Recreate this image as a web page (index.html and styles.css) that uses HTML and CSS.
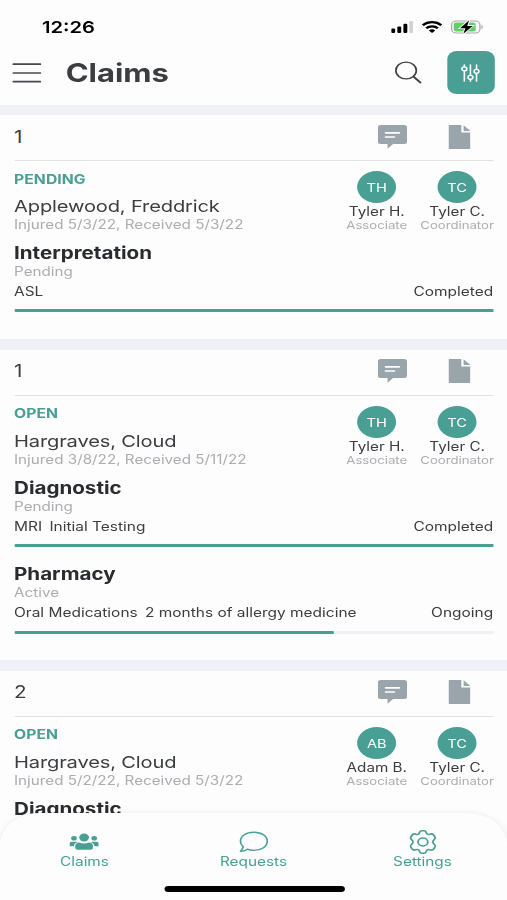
FILE: index.html
```html
<!DOCTYPE html>
<html lang="en">
<head>
<meta charset="utf-8">
<title>Claims</title>
<link rel="stylesheet" href="styles.css">
</head>
<body>
<svg width="0" height="0" class="defs" aria-hidden="true">
  <symbol id="chat" viewBox="0 0 24 24"><path fill="#9aa4ab" d="M2.500 0h19a2.500 2.500 0 0 1 2.500 2.500v14a2.500 2.500 0 0 1-2.500 2.500H12.500L8 23.800V19H2.500A2.500 2.500 0 0 1 0 16.500v-14A2.500 2.500 0 0 1 2.500 0Z"/><path stroke="#fff" stroke-width="1.700" stroke-linecap="round" d="M6.500 7.800h11M6.500 12h7"/></symbol>
  <symbol id="doc" viewBox="0 0 18 24"><path fill="#9aa4ab" d="M1 0h9.500v7.500H18V23a1 1 0 0 1-1 1H1a1 1 0 0 1-1-1V1a1 1 0 0 1 1-1ZM12.400.3 18 6h-5.600Z"/></symbol>
</svg>
<div class="screen">
  <header class="top">
    <div class="status-bar">
      <span class="clock">12:26</span>
      <div class="indicators">
        <svg class="signal" viewBox="0 0 18 12"><rect y="7.600" width="3.200" height="4.400" rx="1"/><rect x="5" y="5.400" width="3.200" height="6.600" rx="1"/><rect x="10" y="2.800" width="3.200" height="9.200" rx="1"/><rect x="14.800" width="3.200" height="12" rx="1" fill="#d2d2d4"/></svg>
        <svg class="wifi" viewBox="0 0 17 12"><path fill="none" stroke="#000" stroke-width="2.200" d="M.9 4.200C5.100.1 11.900.1 16.100 4.200M3.700 7.200c2.600-2.500 7-2.500 9.600 0"/><path d="M5.900 9.400c1.500-1.400 3.700-1.400 5.200 0L8.500 12Z"/></svg>
        <svg class="battery" viewBox="0 0 27 14"><rect x=".6" y=".9" width="23.200" height="12.200" rx="3.800" fill="#fff" stroke="#a5a5a5" stroke-width="1"/><rect x="2.300" y="2.600" width="18" height="8.800" rx="2.200" fill="#62cf65"/><path d="M25 5v4c1.500-.5 1.500-3.500 0-4Z" fill="#a5a5a5"/><path d="M14.900.3 7.500 8.200h4.300l-1.600 5.600L17.900 5.900h-4.500Z" stroke="#fff" stroke-width="1.600" paint-order="stroke"/></svg>
      </div>
    </div>
    <div class="nav">
      <svg class="menu" viewBox="0 0 24 20"><path stroke="#46484b" stroke-width="1.700" stroke-linecap="round" d="M1 1.200h22M1 10h22M1 18.700h22"/></svg>
      <h1>Claims</h1>
      <svg class="search" viewBox="0 0 22 23"><g fill="none" stroke="#3f4144" stroke-width="1.400" stroke-linecap="round"><circle cx="9.200" cy="9.500" r="8.400"/><path d="m15.300 15.700 5.700 6" stroke-width="1.700"/></g></svg>
      <button class="filter" aria-label="Filter"><svg viewBox="0 0 16 18"><g fill="none" stroke="#fff" stroke-width="1.300" stroke-linecap="round"><path d="M3 .8v2M3 7v10.200M8 .8v10.400M8 15.400v1.800M13 .8v4.400M13 9.400v7.800"/><circle cx="3" cy="4.900" r="2"/><circle cx="8" cy="13.300" r="2"/><circle cx="13" cy="7.300" r="2"/></g></svg></button>
    </div>
  </header>
  <main>
    <article class="card">
      <div class="card-head"><span>1</span><svg class="chat"><use href="#chat"/></svg><svg class="doc"><use href="#doc"/></svg></div>
      <div class="summary">
        <div class="claim"><p class="state">PENDING</p><h2>Applewood, Freddrick</h2><p class="dates">Injured 5/3/22, Received 5/3/22</p></div>
        <div class="person associate"><b>TH</b><span class="who">Tyler H.</span><span class="role">Associate</span></div>
        <div class="person coordinator"><b>TC</b><span class="who">Tyler C.</span><span class="role">Coordinator</span></div>
      </div>
      <section class="service"><h3>Interpretation</h3><p class="phase">Pending</p><p class="detail"><span>ASL</span><span class="result">Completed</span></p><div class="bar"><i></i></div></section>
    </article>
    <article class="card">
      <div class="card-head"><span>1</span><svg class="chat"><use href="#chat"/></svg><svg class="doc"><use href="#doc"/></svg></div>
      <div class="summary">
        <div class="claim"><p class="state">OPEN</p><h2>Hargraves, Cloud</h2><p class="dates">Injured 3/8/22, Received 5/11/22</p></div>
        <div class="person associate"><b>TH</b><span class="who">Tyler H.</span><span class="role">Associate</span></div>
        <div class="person coordinator"><b>TC</b><span class="who">Tyler C.</span><span class="role">Coordinator</span></div>
      </div>
      <section class="service"><h3>Diagnostic</h3><p class="phase">Pending</p><p class="detail"><span>MRI</span><span>Initial Testing</span><span class="result">Completed</span></p><div class="bar"><i></i></div></section>
      <section class="service"><h3>Pharmacy</h3><p class="phase">Active</p><p class="detail"><span>Oral Medications</span><span>2 months of allergy medicine</span><span class="result">Ongoing</span></p><div class="bar"><i style="width:66.6%"></i></div></section>
    </article>
    <article class="card">
      <div class="card-head"><span>2</span><svg class="chat"><use href="#chat"/></svg><svg class="doc"><use href="#doc"/></svg></div>
      <div class="summary">
        <div class="claim"><p class="state">OPEN</p><h2>Hargraves, Cloud</h2><p class="dates">Injured 5/2/22, Received 5/3/22</p></div>
        <div class="person associate"><b>AB</b><span class="who">Adam B.</span><span class="role">Associate</span></div>
        <div class="person coordinator"><b>TC</b><span class="who">Tyler C.</span><span class="role">Coordinator</span></div>
      </div>
      <section class="service"><h3>Diagnostic</h3></section>
    </article>
  </main>
  <nav class="tabs">
    <a><svg viewBox="0 0 24 24" fill="#4a9f95"><circle cx="12" cy="7.500" r="4"/><circle cx="3.700" cy="8.300" r="2.300"/><circle cx="20.300" cy="8.300" r="2.300"/><path d="M8 12.500c2.500 1.300 5.500 1.300 8 0 2 .2 3.300 1.600 3.300 3.600v1.700q0 2-2 2H6.700q-2 0-2-2v-1.700c0-2 1.300-3.400 3.300-3.600ZM2.200 11.800h3.300l.8.500c-1.700.7-2.600 2-2.800 4H0v-2.300q0-2.200 2.200-2.200ZM21.800 11.800h-3.300l-.8.500c1.700.7 2.600 2 2.800 4H24v-2.300q0-2.200-2.200-2.200Z"/></svg>Claims</a>
    <a><svg viewBox="0 0 24 24" fill="none" stroke="#4a9f95" stroke-width="1.400" stroke-linejoin="round"><path d="M12.300 2.200C18.700 2.200 23.300 6.200 23.300 11.300S18.700 20.400 12.300 20.400c-2 0-3.800-.4-5.400-1.200-1.600 1.400-3.500 2.100-5.600 2.100 1.300-1.500 2.100-3.100 2.200-4.700C2.100 15.200 1.300 13.400 1.300 11.300c0-5.100 4.600-9.100 11-9.100Z"/></svg>Requests</a>
    <a><svg viewBox="0 0 24 24" fill="none" stroke="#4a9f95" stroke-width="1.500" stroke-linejoin="round"><circle cx="12" cy="12" r="4"/><path d="M11.100.8Q9.700.8 9.400 2.200C9.100 4 8 4.800 6.300 4.200 4.700 3.500 4 3.700 3.200 5L2.100 6.900C1.500 8 1.700 8.700 2.700 9.600 4.200 10.900 4.200 13.100 2.700 14.400 1.700 15.300 1.500 16 2.100 17.100L3.200 19C4 20.300 4.700 20.500 6.300 19.800 8 19.200 9.100 20 9.400 21.800Q9.700 23.200 11.100 23.200h1.800Q14.300 23.200 14.600 21.800C14.900 20 16 19.200 17.700 19.800 19.300 20.500 20 20.300 20.800 19L21.900 17.100C22.500 16 22.300 15.300 21.300 14.400 19.800 13.100 19.800 10.900 21.300 9.600 22.300 8.700 22.500 8 21.900 6.900L20.800 5C20 3.700 19.300 3.500 17.700 4.200 16 4.800 14.900 4 14.600 2.200Q14.300.8 12.900.8Z"/></svg>Settings</a>
    <div class="home"></div>
  </nav>
</div>
</body>
</html>
```
FILE: styles.css
```css
* { box-sizing: border-box; }
body { margin: 0; background: #fdfdfe; overflow: hidden; }
h1, h2, h3, p { margin: 0; }
.defs { position: absolute; }

/* 416px layout widened to fill the 507px viewport */
.screen {
  width: 416px; height: 900px; overflow: hidden;
  display: flex; flex-direction: column;
  transform: scaleX(1.21875); transform-origin: 0 0;
  font-family: Inter, "Liberation Sans", sans-serif; color: #3b3d40;
}
.top { flex: none; height: 104.500px; }
.status-bar { display: flex; align-items: center; height: 54px; padding: 0 19.500px 0 34.500px; }
.clock { font-size: 16.500px; font-weight: 600; color: #000; }
.indicators { display: flex; align-items: center; margin-left: auto; gap: 6.800px; }
.signal { width: 18px; height: 12px; }
.wifi { width: 17px; height: 12px; }
.battery { width: 27px; height: 14px; }
.nav { display: flex; align-items: center; height: 43px; margin-top: -3px; padding: 0 10.500px 0 9.900px; }
.menu { width: 24px; height: 20px; margin-right: 20px; }
h1 { font-size: 25.400px; line-height: 32px; font-weight: 700; padding-top: 1px; }
.search { width: 22px; height: 23px; margin: 0 20.500px 0 auto; }
.filter { width: 38.700px; height: 43px; border: 0; border-radius: 8px; background: #4a9f95; padding: 0; display: flex; align-items: center; justify-content: center; }
.filter svg { width: 16px; height: 18px; }

main { flex: 1; min-height: 0; overflow: hidden; display: flex; flex-direction: column; gap: 10.500px; padding-top: 10.500px; background: #eff1f7; }
.card { flex: none; background: #fdfdfe; padding: 0 10.700px 27.100px 11.500px; }
.card:nth-child(2) { padding-bottom: 26.600px; }
.card:last-child { flex: 1; }
.card-head { display: flex; align-items: center; height: 46px; padding-bottom: 1.500px; border-bottom: 1px solid #dfe2e5; font-size: 17px; }
.card-head .chat { width: 24px; height: 24px; margin-left: auto; }
.card-head .doc { width: 18px; height: 24px; margin: 0 19.200px 0 34px; }
.summary { display: flex; height: 72px; }
.claim { flex: 1; white-space: nowrap; padding-top: 9.500px; }
.state { font-size: 12.900px; line-height: 18px; font-weight: 700; color: #4a9f95; letter-spacing: .05px; }
h2 { font-size: 16.500px; line-height: 20px; font-weight: 400; margin-top: 7.500px; letter-spacing: -.13px; }
.dates { font-size: 12.500px; line-height: 16px; padding-top: 1px; color: #abadb0; }
.person { display: flex; flex-direction: column; align-items: center; padding-top: 10px; white-space: nowrap; }
.associate { width: 50px; margin-right: 10.700px; }
.coordinator { width: 60.500px; }
.person b { width: 32px; height: 32px; border-radius: 50%; background: #4a9f95; color: #fff; font-size: 12px; line-height: 33px; font-weight: 400; text-align: center; }
.who { font-size: 12.500px; line-height: 16px; padding-top: 1px; }
.role { font-size: 10.800px; line-height: 12px; color: #abadb0; }
.service { padding-top: 8px; }
.service + .service { padding-top: 15px; }
h3 { font-size: 16.900px; line-height: 24px; font-weight: 700; color: #292b2e; }
.phase { font-size: 12.500px; line-height: 14px; color: #abadb0; }
.detail { display: flex; gap: 6px; font-size: 12.700px; line-height: 16px; margin-top: 5px; padding-right: .700px; white-space: nowrap; }
.result { margin-left: auto; }
.bar { height: 3px; margin-top: 9px; background: #eff1f5; border-radius: 1px; }
.service + .service .bar { margin-top: 10px; }
.bar i { display: block; width: 100%; height: 3px; background: #4a9f95; border-radius: 1px; }

.tabs {
  position: absolute; left: 0; right: 0; bottom: 0; height: 87.500px;
  display: grid; grid-template-columns: repeat(3, 1fr);
  background: #fdfdfe; border-radius: 32px 32px 0 0; box-shadow: 0 0 5px rgba(40, 50, 60, .1);
}
.tabs a { display: flex; flex-direction: column; align-items: center; padding-top: 17px; font-size: 12.600px; line-height: 16px; color: #4a9f95; }
.tabs svg { width: 24px; height: 24px; }
.home { position: absolute; left: 134.500px; bottom: 8.500px; width: 148px; height: 5.500px; border-radius: 3px; background: #000; }
```
